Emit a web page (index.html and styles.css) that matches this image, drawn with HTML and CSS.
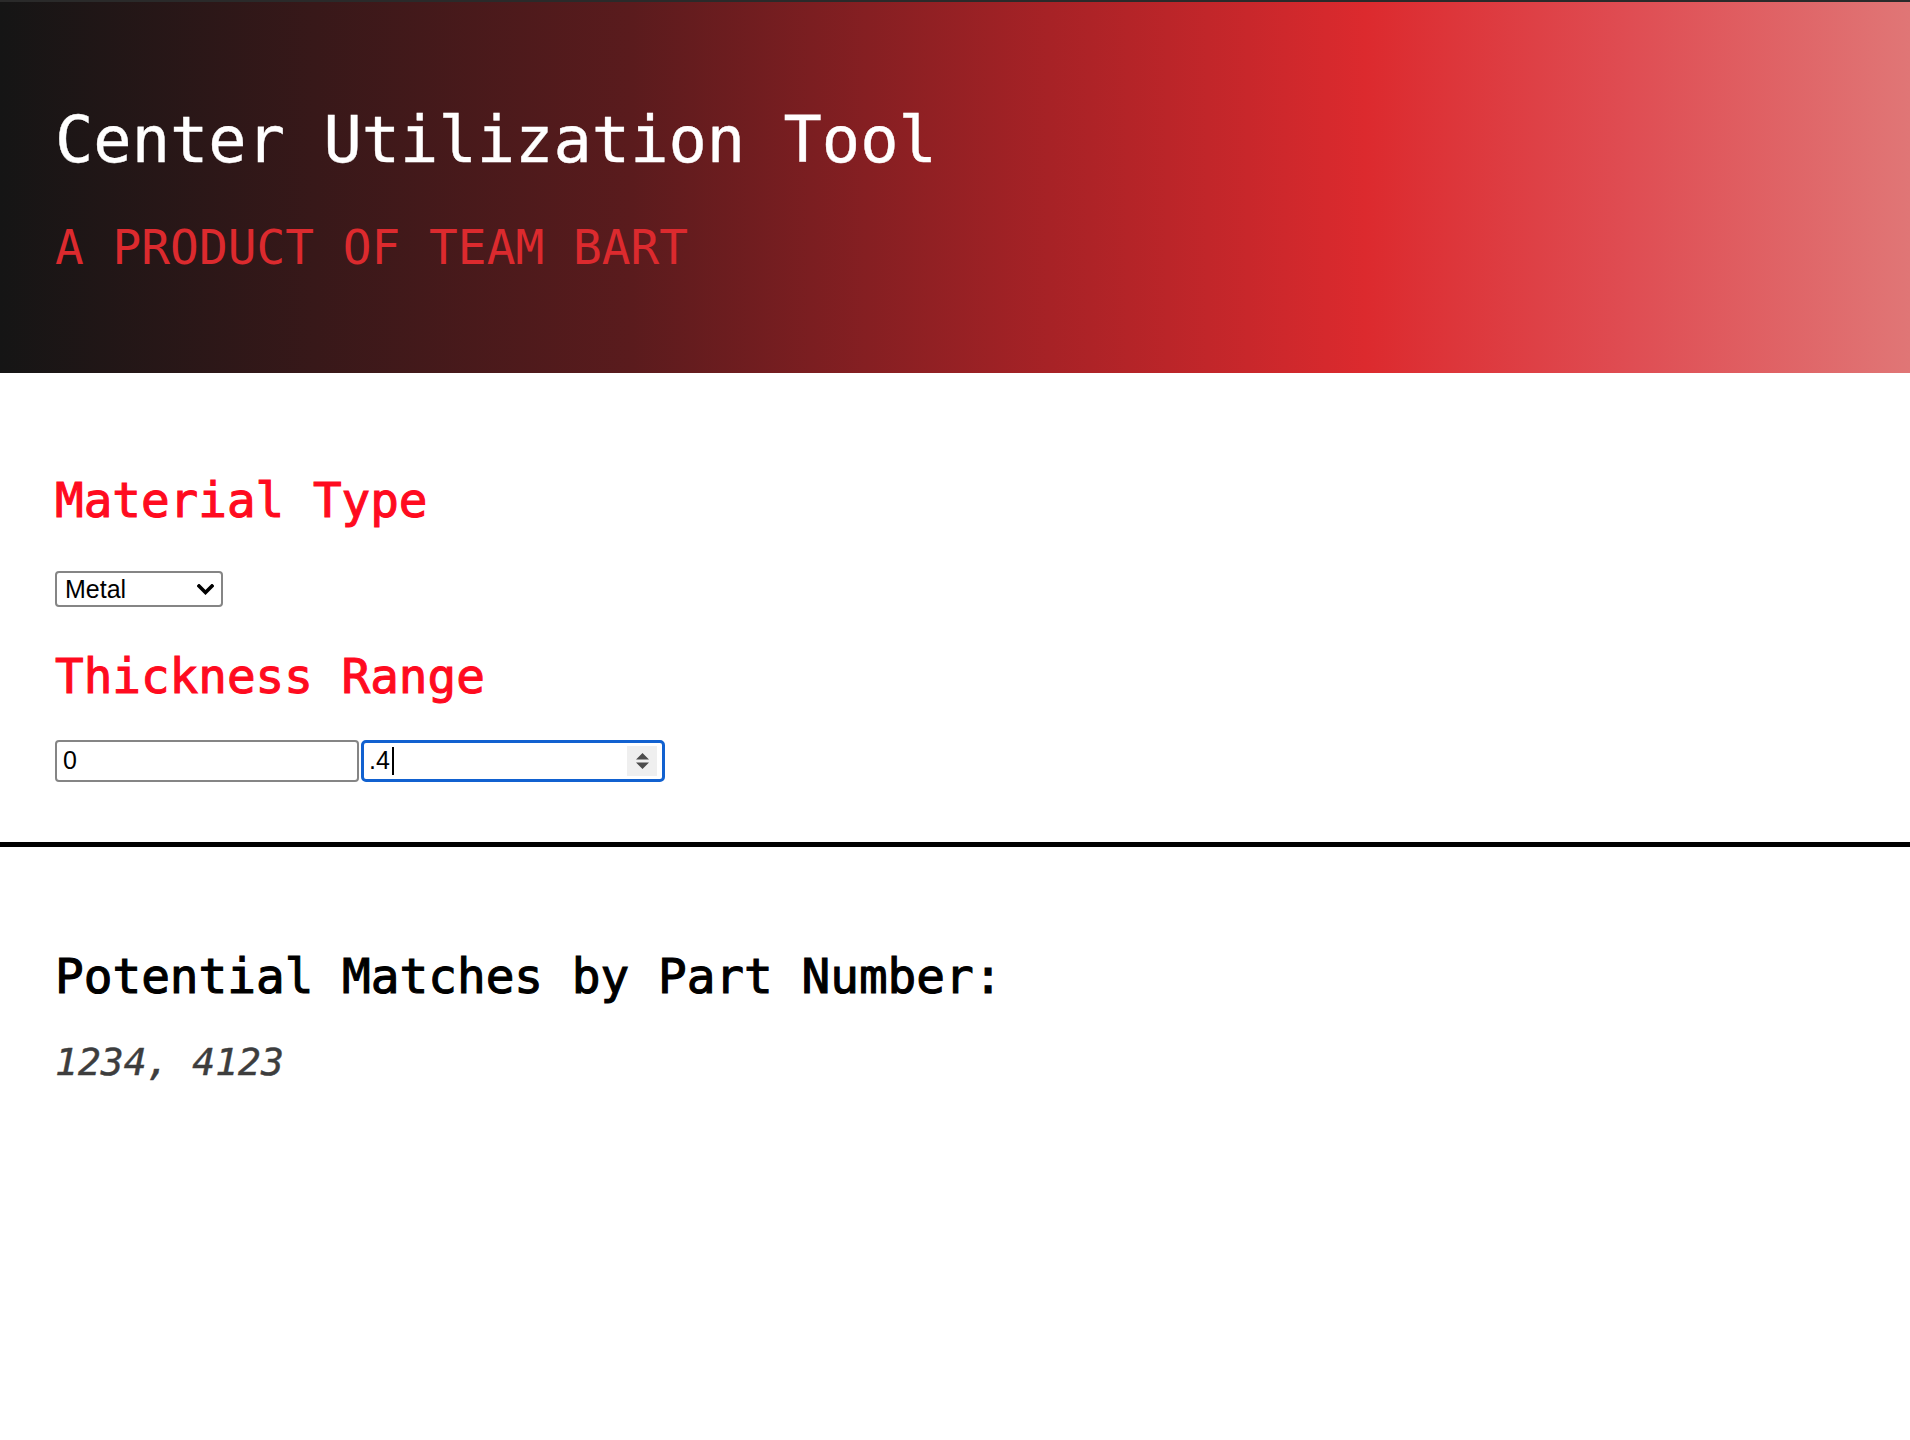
FILE: index.html
```html
<!DOCTYPE html>
<html lang="en">
<head>
<meta charset="utf-8">
<title>Center Utilization Tool</title>
<link rel="stylesheet" href="styles.css">
</head>
<body>
<header class="hero">
  <h1 class="hero-title">Center Utilization Tool</h1>
  <p class="hero-sub">A PRODUCT OF TEAM BART</p>
</header>
<main class="filters">
  <h2 class="section-title">Material Type</h2>
  <div class="select-wrap">
    <select class="material-select">
      <option>Metal</option>
      <option>Plastic</option>
      <option>Wood</option>
    </select>
    <svg class="chevron" width="17" height="11" viewBox="0 0 17 11" aria-hidden="true"><path d="M2 2 L8.5 8.5 L15 2" fill="none" stroke="#000" stroke-width="3.6" stroke-linecap="square"/></svg>
  </div>
  <h2 class="section-title section-title--gap">Thickness Range</h2>
  <div class="range">
    <input class="num-field" type="text" value="0" aria-label="Minimum thickness">
    <div class="num-field num-field--focused" aria-label="Maximum thickness">
      <span class="num-value">.4</span><span class="caret"></span>
      <span class="spin">
        <svg width="15" height="18" viewBox="0 0 15 18" aria-hidden="true"><path d="M7.5 1 L14 7.5 L1 7.5 Z M1 10.5 L14 10.5 L7.5 17 Z" fill="#4d4d4d"/></svg>
      </span>
    </div>
  </div>
</main>
<hr class="divider">
<section class="results">
  <h3 class="results-title">Potential Matches by Part Number:</h3>
  <p class="matches">1234, 4123</p>
</section>
</body>
</html>
```
FILE: styles.css
```css
html, body {
  margin: 0;
  padding: 0;
  background: #ffffff;
}

body {
  font-family: "DejaVu Sans Mono", "Liberation Mono", monospace;
}

.hero {
  border-top: 2px solid #2a2a2a;
  background: linear-gradient(90deg, #151515 0%, #5a1b1d 33%, #a72226 55%, #dc2a2e 71.5%, #df4c52 85%, #e07676 100%);
  padding: 100px 55px 97px;
}

.hero-title {
  margin: 0;
  font-size: 63.7px;
  line-height: 76.8px;
  font-weight: normal;
  color: #ffffff;
  -webkit-text-stroke: 0.4px #ffffff;
}

.hero-sub {
  margin: 40px 0 0;
  font-size: 47.8px;
  line-height: 57.6px;
  color: #dc2a2e;
}

.filters {
  padding: 99px 55px 0;
}

.section-title {
  margin: 0;
  font-size: 47.6px;
  line-height: 57.6px;
  font-weight: normal;
  color: #ff0b1f;
  -webkit-text-stroke: 1.1px #ff0b1f;
}

.section-title--gap {
  margin-top: 41px;
}

.select-wrap {
  position: relative;
  width: 168px;
  margin-top: 41px;
}

.material-select {
  -webkit-appearance: none;
  appearance: none;
  display: block;
  box-sizing: border-box;
  width: 168px;
  height: 36px;
  margin: 0;
  padding: 0 30px 0 8px;
  border: 2px solid #858585;
  border-radius: 4px;
  background: #ffffff;
  color: #000000;
  font-family: "Liberation Sans", Arial, sans-serif;
  font-size: 25px;
}

.chevron {
  position: absolute;
  right: 9px;
  top: 13px;
  pointer-events: none;
}

.range {
  display: flex;
  gap: 2px;
  margin-top: 34px;
}

.num-field {
  box-sizing: border-box;
  width: 304px;
  height: 42px;
  margin: 0;
  padding: 0 6px;
  border: 2px solid #858585;
  border-radius: 4px;
  background: #ffffff;
  color: #000000;
  font-family: "Liberation Sans", Arial, sans-serif;
  font-size: 25px;
  outline: none;
}

.num-field--focused {
  display: flex;
  align-items: center;
  border: 3px solid #1161d0;
  border-radius: 5px;
  padding: 0 5px 0 5px;
}

.num-value {
  line-height: 1;
}

.caret {
  width: 2px;
  height: 28px;
  margin-left: 2px;
  background: #000000;
}

.spin {
  display: flex;
  align-items: center;
  justify-content: center;
  width: 30px;
  height: 30px;
  margin-left: auto;
  background: #efefef;
}

.divider {
  margin: 60px 0 0;
  height: 5px;
  border: 0;
  background: #000000;
}

.results {
  padding: 101px 55px 60px;
}

.results-title {
  margin: 0;
  font-size: 47.7px;
  line-height: 57.6px;
  font-weight: normal;
  color: #000000;
  -webkit-text-stroke: 1.1px #000000;
}

.matches {
  margin: 36px 0 0;
  font-size: 38px;
  line-height: 43.2px;
  font-style: italic;
  color: #3d3d3d;
  -webkit-text-stroke: 0.5px #3d3d3d;
}
```
